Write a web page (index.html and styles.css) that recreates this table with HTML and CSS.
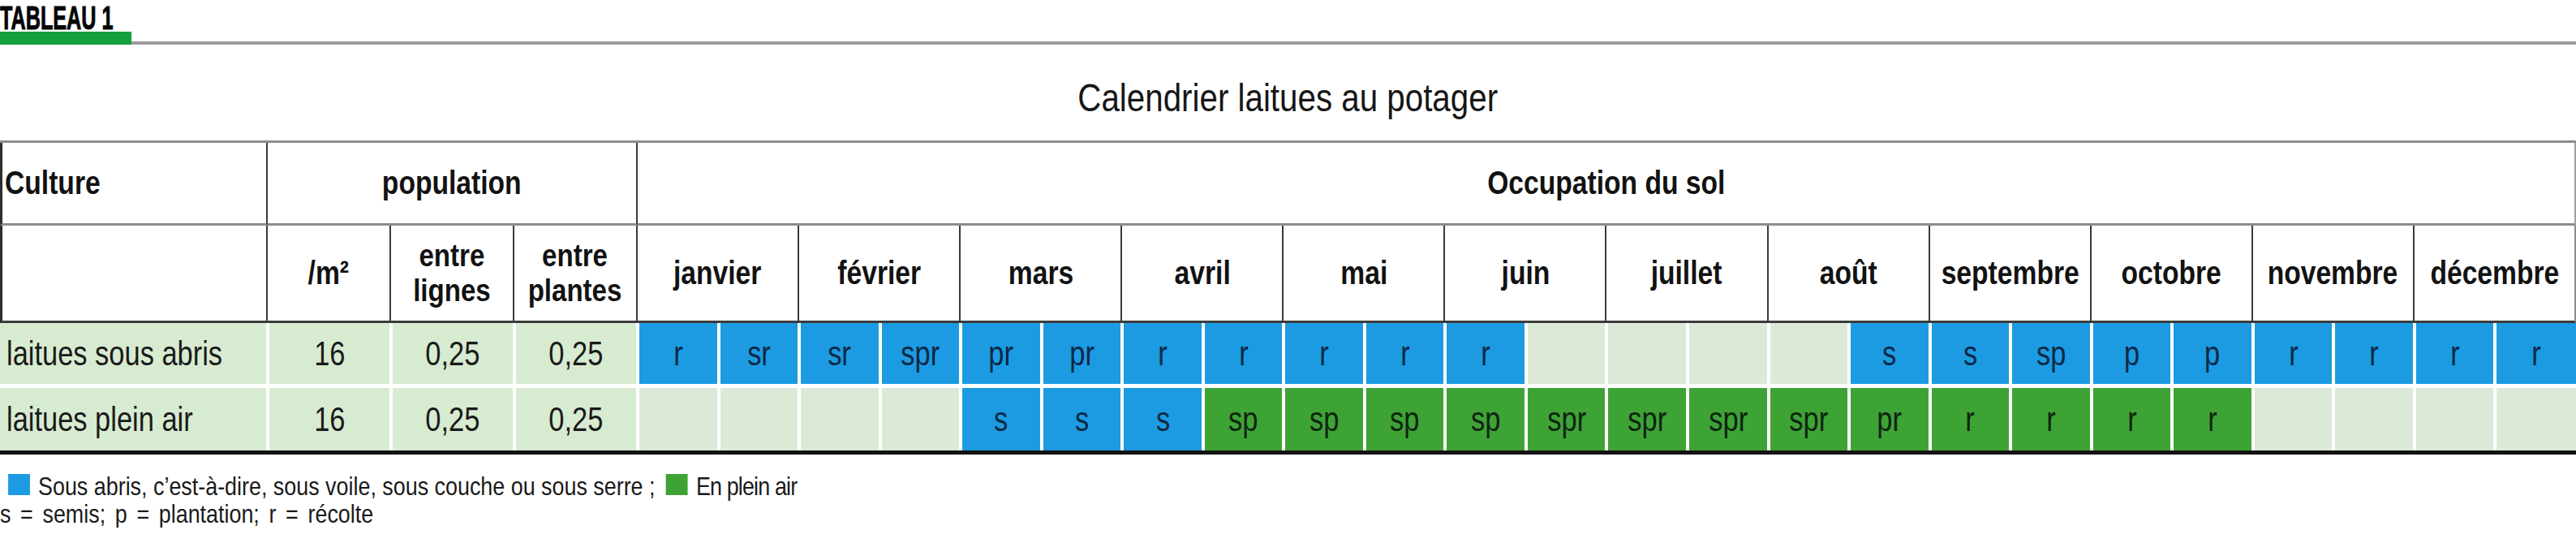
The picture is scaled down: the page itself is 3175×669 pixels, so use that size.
FILE: index.html
```html
<!DOCTYPE html>
<html lang="fr">
<head>
<meta charset="utf-8">
<title>Tableau 1 – Calendrier laitues au potager</title>
<link rel="stylesheet" href="styles.css">
</head>
<body>
<div class="page">
  <div class="kicker"><span class="t t-left">TABLEAU 1</span></div>
  <div class="rule"><span class="rule-accent"></span><span class="rule-line"></span></div>
  <h1 class="title"><span class="t t-title">Calendrier laitues au potager</span></h1>

  <div class="cal">
    <div class="hd hd-top hd-first hd-left"><span class="t t-left">Culture</span></div>
    <div class="hd hd-top hd-pop"><span class="t">population</span></div>
    <div class="hd hd-top hd-occ"><span class="t">Occupation du sol</span></div>

    <div class="hd hd-sub hd-first"></div>
    <div class="hd hd-sub"><span class="t">/m²</span></div>
    <div class="hd hd-sub hd-two"><span class="t">entre<br>lignes</span></div>
    <div class="hd hd-sub hd-two"><span class="t">entre<br>plantes</span></div>
    <div class="hd hd-sub hd-month"><span class="t">janvier</span></div>
    <div class="hd hd-sub hd-month"><span class="t">février</span></div>
    <div class="hd hd-sub hd-month"><span class="t">mars</span></div>
    <div class="hd hd-sub hd-month"><span class="t">avril</span></div>
    <div class="hd hd-sub hd-month"><span class="t">mai</span></div>
    <div class="hd hd-sub hd-month"><span class="t">juin</span></div>
    <div class="hd hd-sub hd-month"><span class="t">juillet</span></div>
    <div class="hd hd-sub hd-month"><span class="t">août</span></div>
    <div class="hd hd-sub hd-month"><span class="t">septembre</span></div>
    <div class="hd hd-sub hd-month"><span class="t">octobre</span></div>
    <div class="hd hd-sub hd-month"><span class="t">novembre</span></div>
    <div class="hd hd-sub hd-month hd-last"><span class="t">décembre</span></div>

    <div class="cell row1 info label"><span class="t t-left">laitues sous abris</span></div>
    <div class="cell row1 info"><span class="t">16</span></div>
    <div class="cell row1 info"><span class="t">0,25</span></div>
    <div class="cell row1 info"><span class="t">0,25</span></div>
    <div class="cell row1 blue"><span class="t">r</span></div>
    <div class="cell row1 blue"><span class="t">sr</span></div>
    <div class="cell row1 blue"><span class="t">sr</span></div>
    <div class="cell row1 blue"><span class="t">spr</span></div>
    <div class="cell row1 blue"><span class="t">pr</span></div>
    <div class="cell row1 blue"><span class="t">pr</span></div>
    <div class="cell row1 blue"><span class="t">r</span></div>
    <div class="cell row1 blue"><span class="t">r</span></div>
    <div class="cell row1 blue"><span class="t">r</span></div>
    <div class="cell row1 blue"><span class="t">r</span></div>
    <div class="cell row1 blue"><span class="t">r</span></div>
    <div class="cell row1 empty"></div>
    <div class="cell row1 empty"></div>
    <div class="cell row1 empty"></div>
    <div class="cell row1 empty"></div>
    <div class="cell row1 blue"><span class="t">s</span></div>
    <div class="cell row1 blue"><span class="t">s</span></div>
    <div class="cell row1 blue"><span class="t">sp</span></div>
    <div class="cell row1 blue"><span class="t">p</span></div>
    <div class="cell row1 blue"><span class="t">p</span></div>
    <div class="cell row1 blue"><span class="t">r</span></div>
    <div class="cell row1 blue"><span class="t">r</span></div>
    <div class="cell row1 blue"><span class="t">r</span></div>
    <div class="cell row1 blue last"><span class="t">r</span></div>

    <div class="cell row2 info label"><span class="t t-left">laitues plein air</span></div>
    <div class="cell row2 info"><span class="t">16</span></div>
    <div class="cell row2 info"><span class="t">0,25</span></div>
    <div class="cell row2 info"><span class="t">0,25</span></div>
    <div class="cell row2 empty"></div>
    <div class="cell row2 empty"></div>
    <div class="cell row2 empty"></div>
    <div class="cell row2 empty"></div>
    <div class="cell row2 blue"><span class="t">s</span></div>
    <div class="cell row2 blue"><span class="t">s</span></div>
    <div class="cell row2 blue"><span class="t">s</span></div>
    <div class="cell row2 green"><span class="t">sp</span></div>
    <div class="cell row2 green"><span class="t">sp</span></div>
    <div class="cell row2 green"><span class="t">sp</span></div>
    <div class="cell row2 green"><span class="t">sp</span></div>
    <div class="cell row2 green"><span class="t">spr</span></div>
    <div class="cell row2 green"><span class="t">spr</span></div>
    <div class="cell row2 green"><span class="t">spr</span></div>
    <div class="cell row2 green"><span class="t">spr</span></div>
    <div class="cell row2 green"><span class="t">pr</span></div>
    <div class="cell row2 green"><span class="t">r</span></div>
    <div class="cell row2 green"><span class="t">r</span></div>
    <div class="cell row2 green"><span class="t">r</span></div>
    <div class="cell row2 green"><span class="t">r</span></div>
    <div class="cell row2 empty"></div>
    <div class="cell row2 empty"></div>
    <div class="cell row2 empty"></div>
    <div class="cell row2 empty last"></div>
  </div>

  <div class="legend">
    <p class="legend-line"><span class="t t-left"><span class="swatch swatch-blue"></span>Sous abris, c’est-à-dire, sous voile, sous couche ou sous serre ;<span class="swatch swatch-green"></span><span class="legend-tail">En plein air</span></span></p>
    <p class="legend-line legend-key"><span class="t t-left">s = semis; p = plantation; r = récolte</span></p>
  </div>
</div>
</body>
</html>
```

FILE: styles.css
```css
html, body {
  margin: 0;
  padding: 0;
  background: #ffffff;
}

.page {
  width: 3175px;
  font-family: "Liberation Sans", Arial, sans-serif;
  color: #151515;
}

/* condensed rendering of the Arial-metric face (Arial Narrow proportions) */
.t {
  display: inline-block;
  white-space: nowrap;
  transform: scaleX(0.82);
  transform-origin: center center;
}

.t-left {
  transform-origin: left center;
}

.kicker {
  font-weight: 700;
  font-size: 40px;
  line-height: 45px;
  height: 39px;
  color: #050505;
  -webkit-text-stroke: 1px #050505;
}

.kicker .t {
  transform: scaleX(0.63);
}

.rule {
  display: flex;
  align-items: flex-end;
  height: 16px;
}

.rule-accent {
  width: 162px;
  height: 16px;
  background: #14a03c;
}

.rule-line {
  flex: 1;
  height: 4px;
  background: #9b9b9b;
}

.title {
  margin: 0;
  height: 118px;
  box-sizing: border-box;
  padding-top: 14px;
  line-height: 104px;
  font-size: 48px;
  font-weight: 400;
  text-align: center;
  color: #161616;
}

.title .t {
  transform: scaleX(0.84);
}

.cal {
  display: grid;
  grid-template-columns: 330px 152px 152px 152px repeat(24, 1fr);
  grid-template-rows: 102px 120px 80px 77px;
  border-top: 3px solid #8e8e8e;
  border-bottom: 5px solid #121212;
}

.hd {
  box-sizing: border-box;
  display: flex;
  align-items: center;
  justify-content: center;
  text-align: center;
  font-weight: 700;
  font-size: 41px;
  color: #121212;
  background: #ffffff;
  border-right: 2px solid #3a3a3a;
}

.hd-top {
  border-bottom: 3px solid #8e8e8e;
}

.hd-sub {
  border-bottom: 3px solid #3c3c3c;
}

.hd-first {
  border-left: 3px solid #2e2e2e;
}

.hd-left {
  justify-content: flex-start;
  padding-left: 3px;
}

.hd-pop {
  grid-column: span 3;
}

.hd-occ {
  grid-column: span 24;
  border-right-color: #a0a0a0;
}

.hd-two {
  font-size: 38px;
  line-height: 43px;
}

.hd-two .t {
  transform: scaleX(0.87);
}

.hd-month {
  grid-column: span 2;
}

.hd-last {
  border-right-color: #8e8e8e;
}

.cell {
  box-sizing: border-box;
  display: flex;
  align-items: center;
  justify-content: center;
  font-size: 42px;
  font-weight: 400;
  border-left: 2px solid #ffffff;
  border-right: 2px solid #ffffff;
}

.row1 {
  border-bottom: 5px solid #ffffff;
}

.info {
  background: #d7ebd1;
  color: #1a1a1a;
}

.label {
  justify-content: flex-start;
  padding-left: 8px;
  border-left: 0;
}

.blue {
  background: #1c9be2;
  color: #0c2846;
}

.green {
  background: #3ea335;
  color: #0f2410;
}

.empty {
  background: #dde9d7;
}

.last {
  border-right: 0;
}

.legend {
  padding-top: 22px;
  font-size: 32px;
  color: #1a1a1a;
}

.legend-line {
  margin: 0;
  line-height: 34px;
  height: 34px;
  white-space: nowrap;
}

.legend-line .t {
  transform: scaleX(0.84);
}

.legend-tail {
  letter-spacing: -1px;
}

.legend-key {
  word-spacing: 5px;
}

.swatch {
  display: inline-block;
  width: 32px;
  height: 26px;
  vertical-align: baseline;
}

.swatch-blue {
  background: #1c9be2;
  margin-left: 12px;
  margin-right: 12px;
}

.swatch-green {
  background: #3ea335;
  margin-left: 16px;
  margin-right: 12px;
}
```
